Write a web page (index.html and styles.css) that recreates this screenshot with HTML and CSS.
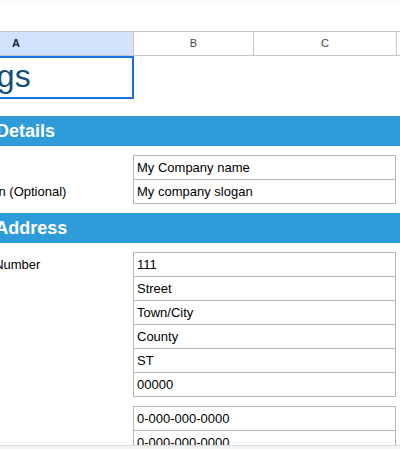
FILE: index.html
```html
<!DOCTYPE html>
<html lang="en">
<head>
    <meta charset="UTF-8">
    <meta name="viewport" content="width=device-width, initial-scale=1.0">
    <title>Settings</title>
    <link rel="stylesheet" href="styles.css">
</head>
<body>

<div class="topbar"></div>
<div class="formula-bar"></div>

<div class="sheet">
    <div class="grid">
        <div class="col-heads">
            <div class="col-head col-a selected">A</div>
            <div class="col-head col-b">B</div>
            <div class="col-head col-c">C</div>
            <div class="col-head col-d"></div>
        </div>

        <div class="title-cell">Settings</div>

        <div class="band">Company Details</div>
        <div class="form">
            <div class="row">
                <div class="label">Company Name</div>
                <div class="field">My Company name</div>
            </div>
            <div class="row">
                <div class="label">Company Slogan (Optional)</div>
                <div class="field">My company slogan</div>
            </div>
        </div>

        <div class="band">Company Address</div>
        <div class="form">
            <div class="row">
                <div class="label">Building Name/Number</div>
                <div class="field">111</div>
            </div>
            <div class="row">
                <div class="label">Street</div>
                <div class="field">Street</div>
            </div>
            <div class="row">
                <div class="label">Town/City</div>
                <div class="field">Town/City</div>
            </div>
            <div class="row">
                <div class="label">County</div>
                <div class="field">County</div>
            </div>
            <div class="row">
                <div class="label">State</div>
                <div class="field">ST</div>
            </div>
            <div class="row">
                <div class="label">Postcode</div>
                <div class="field">00000</div>
            </div>
        </div>

        <div class="form">
            <div class="row">
                <div class="label">Telephone</div>
                <div class="field">0-000-000-0000</div>
            </div>
            <div class="row">
                <div class="label">Mobile</div>
                <div class="field">0-000-000-0000</div>
            </div>
        </div>
    </div>
</div>

<div class="tabbar"></div>

</body>
</html>
```

FILE: styles.css
```css
* {
    margin: 0;
    padding: 0;
    box-sizing: border-box;
}

body {
    font-family: "Liberation Sans", Arial, sans-serif;
    background-color: #fff;
    width: 400px;
    height: 449px;
    overflow: hidden;
    display: flex;
    flex-direction: column;
}

.topbar {
    height: 5px;
    background-color: #f9fbfd;
}

.formula-bar {
    height: 26px;
}

.sheet {
    flex: 1;
    overflow: hidden;
}

/* sheet is scrolled sideways, column A starts off screen */
.grid {
    width: 640px;
    margin-left: -101px;
}

.col-heads {
    display: flex;
    height: 25px;
    border-top: 1px solid #c4c7c5;
    border-bottom: 1px solid #c4c7c5;
}

.col-head {
    font-size: 11px;
    line-height: 23px;
    text-align: center;
    color: #444746;
    border-right: 1px solid #c4c7c5;
}

.col-head.selected {
    background-color: #d3e3fd;
    color: #0b1f3f;
    font-weight: bold;
}

.col-a {
    width: 235px;
}

.col-b {
    width: 120px;
}

.col-c {
    width: 143px;
}

.col-d {
    width: 120px;
}

.title-cell {
    width: 235px;
    height: 43px;
    border: 2px solid #1a73e8;
    display: flex;
    align-items: flex-end;
    padding: 0 0 2px 14px;
    font-size: 32px;
    color: #134f7c;
}

.band {
    margin-top: 17px;
    height: 30px;
    line-height: 30px;
    padding-left: 10px;
    background-color: #2f9cda;
    color: #fff;
    font-size: 18px;
    font-weight: bold;
}

.band + .form {
    margin-top: 9px;
}

.form {
    margin-bottom: 9px;
}

.form + .band {
    margin-top: 0;
}

.row {
    display: flex;
    font-size: 13px;
    color: #000;
}

.label {
    width: 234px;
    height: 24px;
    line-height: 23px;
    padding: 1px 0 0 7px;
    white-space: nowrap;
}

.field {
    width: 263px;
    height: 24px;
    line-height: 23px;
    padding-left: 3px;
    border: 1px solid #b7b7b7;
    border-bottom: none;
}

.row:last-child .field {
    height: 25px;
    border-bottom: 1px solid #b7b7b7;
}

.tabbar {
    height: 4px;
    border-top: 1px solid #dadce0;
    background-color: #f1f3f4;
}
```
